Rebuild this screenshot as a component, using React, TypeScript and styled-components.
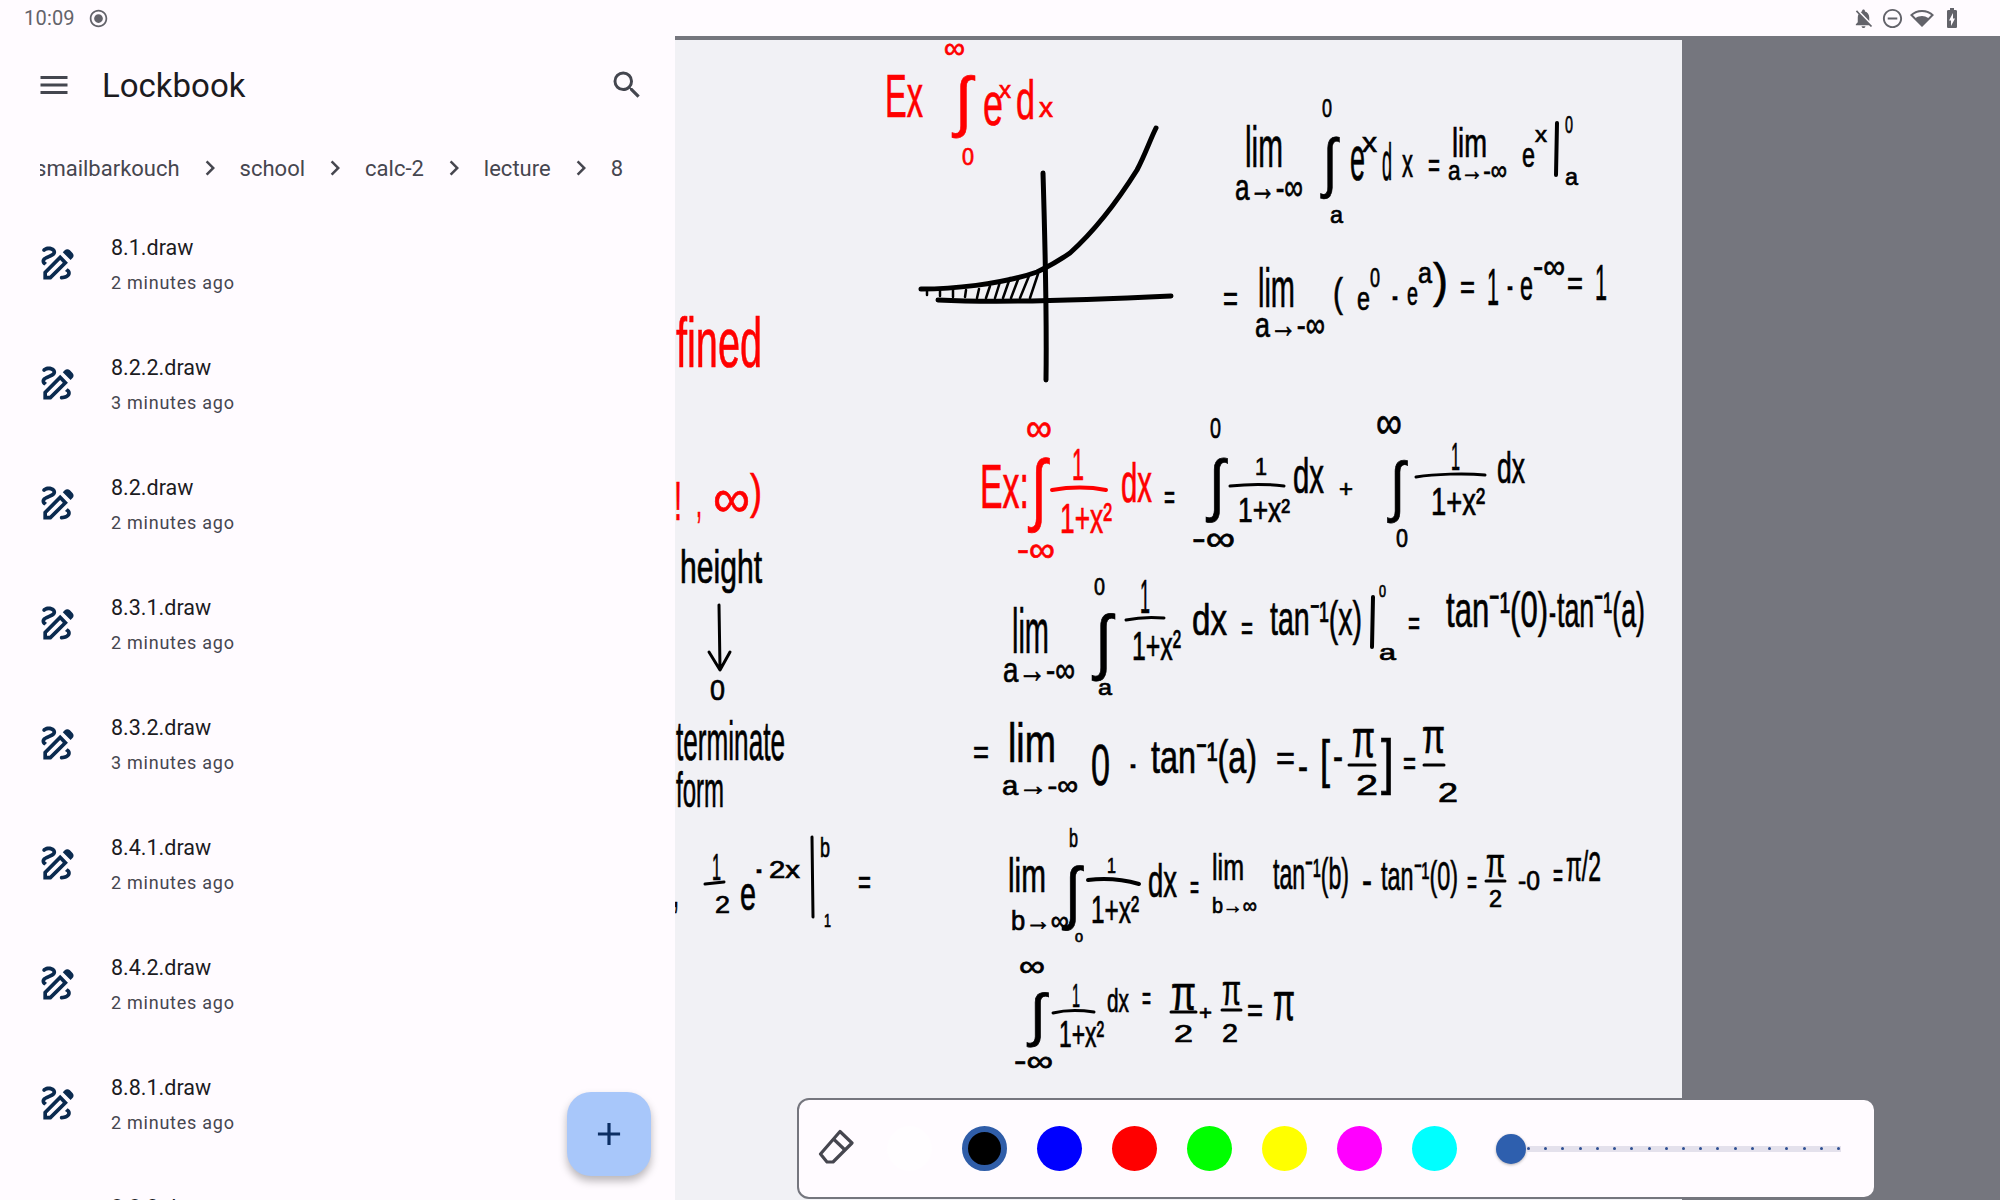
import React from 'react';
import styled, { createGlobalStyle } from 'styled-components';
import {
  MdMenu,
  MdSearch,
  MdChevronRight,
  MdOutlineDraw,
  MdAdd,
  MdRadioButtonChecked,
  MdNotificationsOff,
  MdOutlineDoNotDisturbOn,
  MdNetworkWifi3Bar,
  MdBatteryChargingFull,
} from 'react-icons/md';

const GlobalStyle = createGlobalStyle`
  html, body {
    margin: 0;
    padding: 0;
    height: 1200px;
    overflow: hidden;
    background: #fffbff;
    font-family: Roboto, "Liberation Sans", sans-serif;
  }
`;

const Screen = styled.div`
  width: 2000px;
  height: 1200px;
  display: flex;
  flex-direction: column;
  overflow: hidden;
`;

const StatusBar = styled.div`
  height: 36px;
  flex: none;
  display: flex;
  align-items: center;
  justify-content: space-between;
  padding: 0 36px 0 24px;
  background: #fffbff;
  color: #63636a;
`;

const StatusGroup = styled.div<{ $gap: number }>`
  display: flex;
  align-items: center;
  gap: ${(p) => p.$gap}px;
`;

const Clock = styled.span`
  font-size: 20px;
  letter-spacing: 0.2px;
`;

const Main = styled.div`
  flex: 1;
  display: flex;
  min-height: 0;
`;

const Sidebar = styled.aside`
  width: 675px;
  flex: none;
  position: relative;
  display: flex;
  flex-direction: column;
  overflow: hidden;
  background: #fffbff;
`;

const AppBar = styled.header`
  height: 98px;
  flex: none;
  display: flex;
  align-items: center;
  padding: 0 30px 0 36px;
  color: #44464f;
`;

const Title = styled.h1`
  flex: 1;
  margin: 0 0 -1px 30px;
  font-size: 33px;
  font-weight: 400;
  color: #1c1b1f;
`;

const Breadcrumb = styled.nav`
  height: 68px;
  flex: none;
  margin: 0 52px 0 40px;
  display: flex;
  align-items: center;
  justify-content: flex-end;
  overflow: hidden;
  white-space: nowrap;
  font-size: 22px;
  color: #46464f;
`;

const CrumbArrow = styled.span`
  display: flex;
  margin: 0 15px;
  color: #46464f;
`;

const FileList = styled.ul`
  list-style: none;
  margin: 3px 0 0;
  padding: 0;
`;

const FileRow = styled.li`
  height: 120px;
  display: flex;
  align-items: center;
  padding-left: 36px;
`;

const FileIcon = styled.span`
  display: flex;
  margin: 0 31px 4px 0;
  color: #0b2a4f;
`;

const FileText = styled.div`
  margin-bottom: 2px;
`;

const FileName = styled.div`
  font-size: 21.5px;
  line-height: 28px;
  color: #1c1b1f;
`;

const FileTime = styled.div`
  margin-top: 9px;
  font-size: 18px;
  line-height: 24px;
  letter-spacing: 0.75px;
  color: #46464f;
`;

const Fab = styled.button`
  position: absolute;
  right: 24px;
  bottom: 24px;
  width: 84px;
  height: 84px;
  display: flex;
  align-items: center;
  justify-content: center;
  padding: 0;
  border: none;
  border-radius: 24px;
  background: #a8c7fa;
  color: #0b2e63;
  box-shadow: 0 5px 9px rgba(0, 0, 0, 0.28);
`;

const Canvas = styled.main`
  flex: 1;
  position: relative;
  padding-top: 4px;
  background: #75767e;
`;

const Paper = styled.div`
  width: 1007px;
  height: 1160px;
  background: #f1f1f5;
  overflow: hidden;
`;

const InkSvg = styled.svg`
  display: block;
`;

const InkText = styled.text<{ $red?: boolean }>`
  font-family: "Liberation Sans", sans-serif;
  fill: ${(p) => (p.$red ? '#ff0000' : '#000000')};
  stroke: ${(p) => (p.$red ? '#ff0000' : '#000000')};
  stroke-width: 0.7px;
`;

const InkStroke = styled.path<{ $red?: boolean; $w?: number }>`
  fill: none;
  stroke: ${(p) => (p.$red ? '#ff0000' : '#000000')};
  stroke-width: ${(p) => p.$w ?? 3}px;
  stroke-linecap: round;
  stroke-linejoin: round;
`;

const Toolbar = styled.div`
  position: absolute;
  left: 122px;
  bottom: 1px;
  width: 1079px;
  height: 101px;
  box-sizing: border-box;
  display: flex;
  align-items: center;
  padding-left: 19px;
  border: 2px solid #75767e;
  border-radius: 12px;
  background: #fffbff;
`;

const EraserButton = styled.span`
  display: flex;
  margin: 0 33px 4px 0;
  color: #46464f;
`;

const Swatches = styled.div`
  display: flex;
  gap: 30px;
  margin-right: 39px;
`;

const Swatch = styled.span<{ $color: string; $selected?: boolean }>`
  width: 45px;
  height: 45px;
  box-sizing: border-box;
  border-radius: 50%;
  background: ${(p) => p.$color};
  border: ${(p) => (p.$selected ? '6px solid #2f5da8' : 'none')};
`;

const Slider = styled.div`
  width: 345px;
  display: flex;
  align-items: center;
`;

const Thumb = styled.span`
  width: 30px;
  height: 30px;
  flex: none;
  border-radius: 50%;
  background: #2e5fae;
  box-shadow: 0 1px 3px rgba(0, 0, 0, 0.3);
`;

const Track = styled.div`
  flex: 1;
  height: 6px;
  display: flex;
  align-items: center;
  justify-content: space-between;
  padding: 0 1px;
  background: #e4e1ec;
`;

const Tick = styled.span`
  width: 3px;
  height: 3px;
  border-radius: 50%;
  background: #2f4f92;
`;

const crumbs = ['ismailbarkouch', 'school', 'calc-2', 'lecture', '8'];

const files = [
  ['8.1.draw', '2 minutes ago'],
  ['8.2.2.draw', '3 minutes ago'],
  ['8.2.draw', '2 minutes ago'],
  ['8.3.1.draw', '2 minutes ago'],
  ['8.3.2.draw', '3 minutes ago'],
  ['8.4.1.draw', '2 minutes ago'],
  ['8.4.2.draw', '2 minutes ago'],
  ['8.8.1.draw', '2 minutes ago'],
  ['8.8.2.draw', '2 minutes ago'],
];

const colors = ['#fffdff', '#000000', '#0000ff', '#ff0000', '#00ff00', '#ffff00', '#ff00ff', '#00ffff'];

// text, x1, y1, x2, y2, red: box of the written mark on screen
type Mark = [string, number, number, number, number, boolean?];

const marks: Mark[] = [
  ['Ex', 885, 72, 923, 117, true],
  ['∞', 944, 42, 965, 55, true],
  ['∫', 955, 60, 972, 137, true],
  ['0', 962, 148, 974, 165, true],
  ['e', 983, 93, 1003, 125, true],
  ['x', 999, 85, 1011, 98, true],
  ['d', 1016, 78, 1035, 119, true],
  ['x', 1039, 102, 1053, 117, true],
  ['fined', 676, 316, 762, 367, true],

  ['lim', 1245, 125, 1283, 167],
  ['a→-∞', 1235, 180, 1303, 200],
  ['0', 1322, 98, 1332, 117],
  ['∫', 1323, 122, 1337, 198],
  ['a', 1330, 210, 1343, 223],
  ['e', 1350, 147, 1365, 180],
  ['x', 1362, 137, 1377, 152],
  ['d', 1382, 142, 1392, 180],
  ['x', 1402, 155, 1413, 177],
  ['=', 1428, 160, 1440, 170],
  ['lim', 1452, 127, 1487, 157],
  ['a→-∞', 1448, 165, 1507, 180],
  ['e', 1522, 148, 1535, 167],
  ['x', 1535, 130, 1547, 142],
  ['0', 1565, 115, 1573, 133],
  ['a', 1565, 172, 1578, 185],

  ['=', 1223, 292, 1238, 303],
  ['lim', 1258, 267, 1295, 307],
  ['a→-∞', 1255, 318, 1325, 337],
  ['(', 1333, 277, 1343, 315],
  ['e', 1357, 292, 1370, 310],
  ['0', 1370, 267, 1380, 287],
  ['-', 1392, 295, 1398, 299],
  ['e', 1407, 287, 1418, 305],
  ['a', 1418, 267, 1432, 283],
  [')', 1433, 262, 1448, 307],
  ['=', 1460, 282, 1475, 292],
  ['1', 1487, 267, 1499, 305],
  ['-', 1507, 285, 1513, 289],
  ['e', 1520, 277, 1533, 300],
  ['-∞', 1533, 260, 1565, 275],
  ['=', 1567, 278, 1583, 288],
  ['1', 1595, 263, 1607, 300],

  ['!', 674, 480, 682, 520, true],
  [',', 696, 510, 702, 524, true],
  ['∞', 713, 488, 750, 512, true],
  [')', 750, 472, 762, 518, true],
  ['Ex:', 980, 462, 1029, 508, true],
  ['∫', 1031, 440, 1047, 532, true],
  ['∞', 1026, 420, 1052, 437, true],
  ['-∞', 1017, 543, 1055, 558, true],
  ['1', 1072, 448, 1084, 480, true],
  ['1+x²', 1060, 502, 1112, 533, true],
  ['dx', 1121, 462, 1152, 502, true],
  ['=', 1164, 492, 1175, 502],
  ['0', 1210, 417, 1221, 438],
  ['∫', 1209, 443, 1225, 522],
  ['-∞', 1192, 532, 1235, 547],
  ['1', 1255, 457, 1267, 475],
  ['1+x²', 1238, 497, 1290, 522],
  ['dx', 1293, 457, 1324, 493],
  ['+', 1339, 481, 1353, 495],
  ['∞', 1376, 413, 1402, 433],
  ['∫', 1390, 445, 1405, 522],
  ['0', 1396, 528, 1408, 547],
  ['1', 1451, 442, 1460, 470],
  ['1+x²', 1431, 487, 1485, 515],
  ['dx', 1497, 450, 1525, 483],

  ['height', 680, 550, 762, 593],
  ['0', 710, 678, 725, 700],
  ['lim', 1012, 607, 1049, 653],
  ['a→-∞', 1003, 663, 1075, 682],
  ['0', 1094, 577, 1105, 595],
  ['∫', 1095, 597, 1112, 680],
  ['a', 1098, 683, 1112, 695],
  ['1', 1140, 578, 1150, 613],
  ['1+x²', 1132, 630, 1181, 660],
  ['dx', 1192, 603, 1227, 635],
  ['=', 1241, 623, 1253, 633],
  ['tan⁻¹(x)', 1270, 600, 1362, 645],
  ['0', 1379, 585, 1386, 597],
  ['a', 1379, 648, 1396, 660],
  ['=', 1408, 618, 1420, 628],
  ['tan⁻¹(0)', 1446, 590, 1548, 637],
  ['-', 1549, 612, 1556, 616],
  ['tan⁻¹(a)', 1557, 590, 1645, 637],

  ['terminate', 676, 720, 785, 760],
  ['form', 676, 770, 724, 807],
  ['=', 973, 747, 989, 757],
  ['lim', 1008, 722, 1056, 762],
  ['a→-∞', 1002, 780, 1078, 795],
  ['0', 1091, 743, 1110, 785],
  ['-', 1130, 763, 1136, 767],
  ['tan⁻¹(a)', 1151, 740, 1257, 783],
  ['=', 1276, 753, 1295, 763],
  ['-', 1298, 766, 1308, 770],
  ['[', 1320, 740, 1330, 788],
  ['-', 1333, 756, 1343, 760],
  ['π', 1352, 730, 1375, 757],
  ['2', 1356, 773, 1378, 795],
  [']', 1381, 738, 1394, 795],
  ['=', 1403, 758, 1416, 768],
  ['π', 1422, 728, 1445, 753],
  ['2', 1438, 782, 1458, 802],

  [',', 673, 900, 679, 914],
  ['1', 712, 853, 721, 880],
  ['2', 715, 895, 730, 913],
  ['e', 740, 885, 756, 910],
  ['-', 756, 868, 762, 872],
  ['2x', 769, 860, 800, 878],
  ['b', 820, 837, 830, 857],
  ['1', 824, 913, 831, 927],
  ['=', 858, 877, 871, 887],
  ['lim', 1008, 857, 1046, 892],
  ['b→∞', 1011, 910, 1069, 930],
  ['b', 1069, 828, 1078, 847],
  ['∫', 1065, 850, 1081, 930],
  ['0', 1075, 932, 1083, 942],
  ['1', 1107, 857, 1116, 873],
  ['1+x²', 1091, 895, 1139, 923],
  ['dx', 1148, 863, 1177, 897],
  ['=', 1190, 882, 1199, 892],
  ['lim', 1212, 853, 1244, 880],
  ['b→∞', 1212, 897, 1257, 913],
  ['tan⁻¹(b)', 1273, 857, 1349, 898],
  ['-', 1362, 880, 1372, 884],
  ['tan⁻¹(0)', 1381, 860, 1458, 898],
  ['=', 1467, 877, 1477, 887],
  ['π', 1486, 855, 1505, 877],
  ['2', 1489, 890, 1502, 907],
  ['-0', 1518, 870, 1540, 890],
  ['=', 1553, 870, 1563, 880],
  ['π/2', 1566, 850, 1601, 890],

  ['∞', 1019, 960, 1045, 973],
  ['∫', 1030, 980, 1046, 1047],
  ['-∞', 1014, 1055, 1053, 1068],
  ['1', 1072, 983, 1080, 1007],
  ['1+x²', 1059, 1020, 1104, 1047],
  ['dx', 1107, 988, 1129, 1012],
  ['=', 1142, 993, 1151, 1003],
  ['π', 1171, 985, 1196, 1010],
  ['2', 1174, 1025, 1193, 1042],
  ['+', 1199, 1006, 1212, 1018],
  ['π', 1222, 982, 1241, 1005],
  ['2', 1222, 1023, 1238, 1042],
  ['=', 1247, 1005, 1263, 1015],
  ['π', 1273, 993, 1295, 1020],
];

// plain pen lines: plot, fraction bars, evaluation bars, arrow
const penLines: { d: string; w?: number; red?: boolean }[] = [
  { d: 'M1043 173 C1045 240 1047 310 1046 380', w: 5 },
  { d: 'M938 300 C1000 303 1090 300 1171 296', w: 5 },
  { d: 'M921 289 C950 289 1000 285 1037 272 C1050 266 1060 260 1070 253 C1090 235 1115 205 1137 170 C1145 155 1150 140 1156 128', w: 5 },
  { d: 'M927 291 L927 295 M940 291 L940 296 M953 290 L953 297 M966 290 L965 297 M979 289 L977 298 M990 286 L986 298 M1000 282 L995 298 M1010 278 L1003 298 M1019 277 L1011 298 M1029 276 L1020 298 M1038 274 L1030 298', w: 2.5 },
  { d: 'M1052 490 C1070 487 1090 487 1106 490', w: 4, red: true },
  { d: 'M1230 486 C1248 484 1268 484 1284 486', w: 3 },
  { d: 'M1416 477 C1435 474 1465 473 1485 475', w: 3 },
  { d: 'M1126 620 C1140 617 1152 617 1164 618', w: 3 },
  { d: 'M1557 123 L1556 175', w: 4 },
  { d: 'M1373 597 L1372 647', w: 4 },
  { d: 'M719 605 L720 668 M709 652 L720 670 L730 652', w: 3 },
  { d: 'M1349 765 L1375 765', w: 3 },
  { d: 'M1424 765 L1444 765', w: 3 },
  { d: 'M705 884 L724 882', w: 3 },
  { d: 'M812 837 L813 917', w: 3 },
  { d: 'M1088 880 C1105 878 1125 880 1139 884', w: 4 },
  { d: 'M1486 881 L1505 881', w: 3 },
  { d: 'M1053 1013 C1065 1010 1080 1010 1094 1012', w: 3 },
  { d: 'M1171 1012 L1196 1012', w: 3 },
  { d: 'M1222 1010 L1241 1010', w: 3 },
];

// how tall the written part of a mark is, in em, and where its foot sits
const metricsFor = (t: string) => {
  if (t === '∫') return { ink: 1.16, foot: -0.2 };
  if (t === '=') return { ink: 0.3, foot: 0.22 };
  if (t === '-') return { ink: 0.09, foot: 0.24 };
  if (t === '+') return { ink: 0.58, foot: 0.1 };
  if (t === ',') return { ink: 0.3, foot: -0.15 };
  if (/^-?∞$/.test(t)) return { ink: 0.44, foot: 0.1 };
  if (/[()[\]]/.test(t) || t === 'height' || t === 'π/2') return { ink: 0.94, foot: -0.21 };
  if (/[bdfhiklt0-9A-Z!]/.test(t)) return { ink: 0.73, foot: 0 };
  return { ink: 0.53, foot: 0 };
};

const HandNotes = () => (
  <InkSvg width={1007} height={1058} viewBox="675 40 1007 1058">
    {penLines.map((line, i) => (
      <InkStroke key={i} d={line.d} $w={line.w} $red={line.red} />
    ))}
    {marks.map(([t, x1, y1, x2, y2, red], i) => {
      const { ink, foot } = metricsFor(t);
      const size = (y2 - y1) / ink;
      return (
        <InkText
          key={i}
          x={x1}
          y={y2 + foot * size}
          fontSize={size}
          textLength={x2 - x1}
          lengthAdjust="spacingAndGlyphs"
          $red={red}
        >
          {t}
        </InkText>
      );
    })}
  </InkSvg>
);

const EraserIcon = () => (
  <svg width="36" height="36" viewBox="0 0 36 36" fill="none" stroke="currentColor" strokeWidth="3.2" strokeLinejoin="round">
    <path d="M22 2.5 L34 14 L15 33 L9 33 L2.5 25 Z" />
    <path d="M15 9.5 L27 21" />
  </svg>
);

export default function App() {
  return (
    <>
      <GlobalStyle />
      <Screen>
        <StatusBar>
          <StatusGroup $gap={13}>
            <Clock>10:09</Clock>
            <MdRadioButtonChecked size={21} />
          </StatusGroup>
          <StatusGroup $gap={6}>
            <MdNotificationsOff size={23} />
            <MdOutlineDoNotDisturbOn size={23} />
            <MdNetworkWifi3Bar size={24} />
            <MdBatteryChargingFull size={24} />
          </StatusGroup>
        </StatusBar>
        <Main>
          <Sidebar>
            <AppBar>
              <MdMenu size={36} />
              <Title>Lockbook</Title>
              <MdSearch size={36} />
            </AppBar>
            <Breadcrumb>
              {crumbs.map((crumb, i) => (
                <React.Fragment key={crumb}>
                  {i > 0 && (
                    <CrumbArrow>
                      <MdChevronRight size={30} />
                    </CrumbArrow>
                  )}
                  <span>{crumb}</span>
                </React.Fragment>
              ))}
            </Breadcrumb>
            <FileList>
              {files.map(([name, time], i) => (
                <FileRow key={i}>
                  <FileIcon>
                    <MdOutlineDraw size={44} />
                  </FileIcon>
                  <FileText>
                    <FileName>{name}</FileName>
                    <FileTime>{time}</FileTime>
                  </FileText>
                </FileRow>
              ))}
            </FileList>
            <Fab>
              <MdAdd size={38} />
            </Fab>
          </Sidebar>
          <Canvas>
            <Paper>
              <HandNotes />
            </Paper>
            <Toolbar>
              <EraserButton>
                <EraserIcon />
              </EraserButton>
              <Swatches>
                {colors.map((c) => (
                  <Swatch key={c} $color={c} $selected={c === '#000000'} />
                ))}
              </Swatches>
              <Slider>
                <Thumb />
                <Track>
                  {Array.from({ length: 19 }, (_, i) => (
                    <Tick key={i} />
                  ))}
                </Track>
              </Slider>
            </Toolbar>
          </Canvas>
        </Main>
      </Screen>
    </>
  );
}
